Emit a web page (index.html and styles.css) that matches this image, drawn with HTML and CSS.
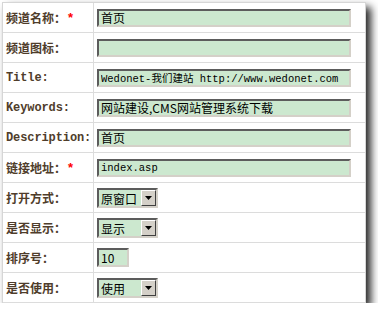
FILE: index.html
```html
<!DOCTYPE html>
<html lang="zh-CN">
<head>
  <meta charset="UTF-8">
  <title>栏目设置</title>
  <link rel="stylesheet" href="styles.css">
</head>
<body>
  <div class="panel">
    <div class="lbl">频道名称：<span class="req">*</span></div>
    <div class="val"><input class="txt" type="text" value="首页"></div>

    <div class="lbl">频道图标：</div>
    <div class="val"><input class="txt" type="text" value=""></div>

    <div class="lbl en">Title:</div>
    <div class="val"><input class="txt mono" type="text" value="Wedonet-我们建站 http://www.wedonet.com"></div>

    <div class="lbl en">Keywords:</div>
    <div class="val"><input class="txt" type="text" value="网站建设,CMS网站管理系统下载"></div>

    <div class="lbl en">Description:</div>
    <div class="val"><input class="txt" type="text" value="首页"></div>

    <div class="lbl">链接地址：<span class="req">*</span></div>
    <div class="val"><input class="txt mono" type="text" value="index.asp"></div>

    <div class="lbl">打开方式：</div>
    <div class="val">
      <span class="sel">
        <select><option>原窗口</option><option>新窗口</option></select>
        <span class="arrow"><svg width="7" height="4" viewBox="0 0 7 4"><path d="M0 0h7L3.5 4z"/></svg></span>
      </span>
    </div>

    <div class="lbl">是否显示：</div>
    <div class="val">
      <span class="sel">
        <select><option>显示</option><option>隐藏</option></select>
        <span class="arrow"><svg width="7" height="4" viewBox="0 0 7 4"><path d="M0 0h7L3.5 4z"/></svg></span>
      </span>
    </div>

    <div class="lbl">排序号：</div>
    <div class="val"><input class="txt num" type="text" value="10"></div>

    <div class="lbl">是否使用：</div>
    <div class="val">
      <span class="sel">
        <select><option>使用</option><option>停用</option></select>
        <span class="arrow"><svg width="7" height="4" viewBox="0 0 7 4"><path d="M0 0h7L3.5 4z"/></svg></span>
      </span>
    </div>
  </div>
</body>
</html>
```

FILE: styles.css
```css
html, body {
  margin: 0;
  padding: 0;
  background: #fff;
}

body {
  padding: 2px 0 0 2px;
  font-family: "Noto Sans CJK SC", sans-serif;
  font-size: 12px;
}

.panel {
  width: 364px;
  box-sizing: border-box;
  display: grid;
  grid-template-columns: 91px 1fr;
  grid-auto-rows: 30px;
  background: #fff;
  border: 1px solid #d6d6d6;
  border-bottom: none;
  box-shadow: 5px 5px 8px rgba(0, 0, 0, 0.85);
}

.lbl, .val {
  display: flex;
  align-items: center;
  box-sizing: border-box;
  border-bottom: 1px solid #dcdcdc;
}

.lbl {
  padding-left: 3px;
  border-right: 1px solid #dcdcdc;
  color: #4f3d2b;
  font-weight: 700;
  white-space: nowrap;
}

.lbl.en {
  font-family: "Liberation Mono", monospace;
  font-size: 12px;
  letter-spacing: -0.1px;
}

.req {
  color: #f00;
  margin-left: 2px;
  font-family: "Liberation Sans", sans-serif;
  font-size: 13px;
}

.val {
  padding-left: 3px;
}

.txt {
  width: 254px;
  height: 18px;
  box-sizing: border-box;
  margin: 0;
  padding: 0 2px;
  border: 2px solid;
  border-color: #5c5c5c #d4d0c8 #d4d0c8 #5c5c5c;
  background: #cce8cf;
  color: #000;
  font-family: "Noto Sans CJK SC", sans-serif;
  font-size: 12px;
  outline: none;
}

.txt.mono {
  font-family: "Liberation Mono", "Noto Sans CJK SC", monospace;
  font-size: 10.5px;
}

.txt.num {
  width: 32px;
  height: 19px;
}

.sel {
  display: inline-flex;
  width: 61px;
  height: 20px;
  box-sizing: border-box;
  border: 2px solid;
  border-color: #5c5c5c #d4d0c8 #d4d0c8 #5c5c5c;
  background: #cce8cf;
}

.sel select {
  flex: 1;
  min-width: 0;
  height: 100%;
  margin: 0;
  padding: 0 0 0 2px;
  border: none;
  background: transparent;
  -webkit-appearance: none;
  appearance: none;
  font-family: "Noto Sans CJK SC", sans-serif;
  font-size: 12px;
  color: #000;
  outline: none;
}

.arrow {
  width: 15px;
  box-sizing: border-box;
  display: flex;
  align-items: center;
  justify-content: center;
  background: #d4d0c8;
  border: 1px solid;
  border-color: #fff #404040 #404040 #fff;
}
```
